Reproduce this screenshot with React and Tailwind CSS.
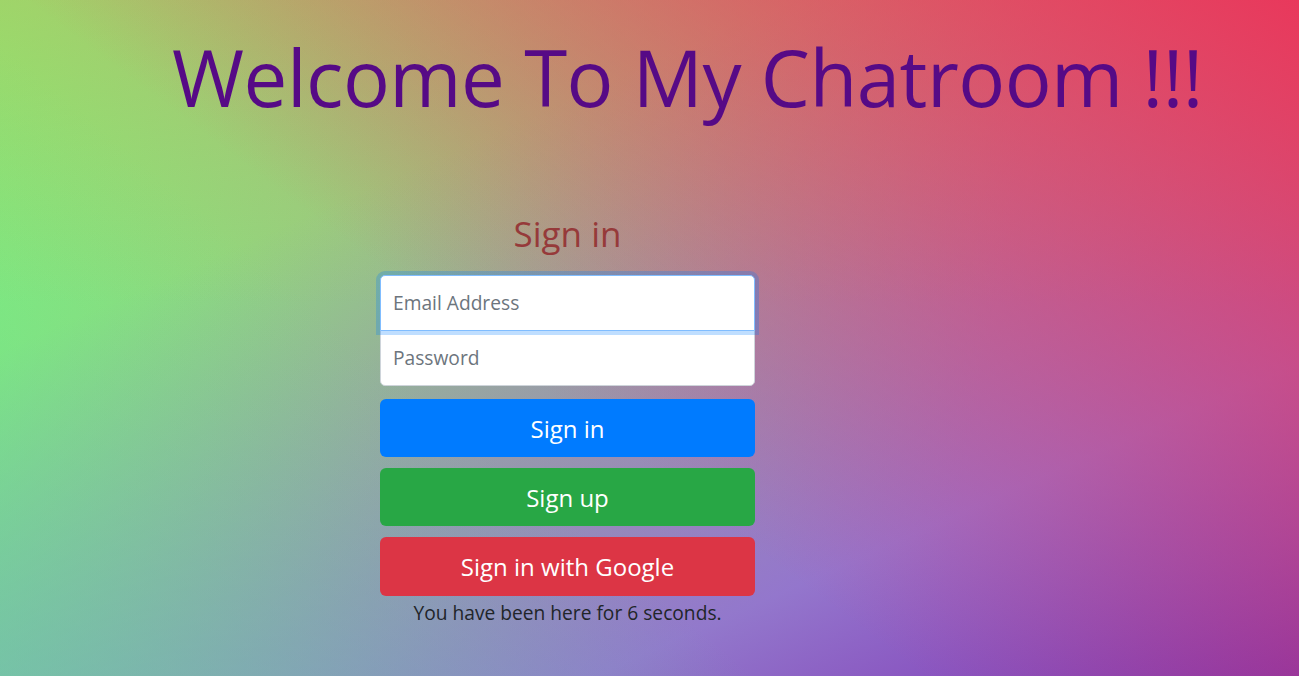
import { useEffect, useState } from 'react';

export default function App() {
  const [seconds, setSeconds] = useState(6);

  // keep the timer text static-ish for the screenshot
  useEffect(() => {
    setSeconds(6);
  }, []);

  return (
    <div
      className="min-h-screen w-full bg-[#b99494] bg-[linear-gradient(217deg,rgba(236,50,88,0.93),rgba(236,50,88,0)_58%),linear-gradient(180deg,rgba(228,150,75,0.3),rgba(228,150,75,0)_45%),linear-gradient(40deg,rgba(100,210,170,0.5),rgba(100,210,170,0)_36%),linear-gradient(336deg,rgba(120,50,180,0.95),rgba(135,100,230,0.7)_25%,rgba(135,100,230,0)_72%),linear-gradient(100deg,rgba(128,242,118,0.98),rgba(128,242,118,0)_74%)] font-['Open_Sans',sans-serif]"
    >
      {/* Header */}
      <div className="pl-[76px] pt-[31px] text-center">
        <h1 className="text-[78px] leading-[1.2] font-normal text-[#560a86] tracking-[-0.5px]">
          Welcome To My Chatroom !!!
        </h1>
      </div>

      {/* Sign in form */}
      <form className="ml-[380px] w-[375px] mt-[88px] flex flex-col" onSubmit={e => e.preventDefault()}>
        <h3 className="text-center text-[35px] leading-[1.2] font-normal text-[#963a3a] mb-[20px]">Sign in</h3>

        <input
          type="email"
          placeholder="Email Address"
          className="relative z-10 h-[56px] mb-[-1px] px-[12px] text-[19.2px] bg-white border border-[#80bdff] rounded-t-[5px] outline-none shadow-[0_0_0_4px_rgba(0,123,255,0.25)] placeholder:text-[#6c757d]"
        />
        <input
          type="password"
          placeholder="Password"
          className="h-[56px] px-[12px] text-[19.2px] bg-white border border-[#ced4da] rounded-b-[5px] outline-none placeholder:text-[#6c757d]"
        />

        <button type="submit" className="mt-[13px] h-[58px] pt-[2px] rounded-[6px] bg-[#007bff] text-white text-[24px]">
          Sign in
        </button>
        <button type="button" className="mt-[11px] h-[58px] pt-[2px] rounded-[6px] bg-[#28a745] text-white text-[24px]">
          Sign up
        </button>
        <button type="button" className="mt-[11px] h-[59px] pt-[2px] rounded-[6px] bg-[#dc3545] text-white text-[24px]">
          Sign in with Google
        </button>

        <p className="mt-[3px] text-center text-[19.2px] leading-[1.5] text-[#212529]">
          You have been here for {seconds} seconds.
        </p>
      </form>
    </div>
  );
}
